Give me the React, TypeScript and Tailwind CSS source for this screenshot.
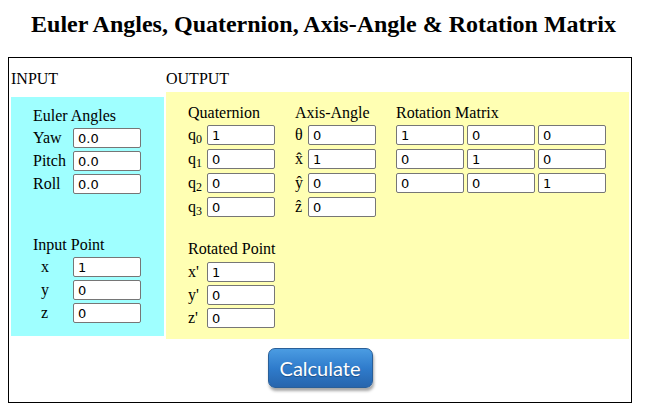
const inputCls =
  "h-[20px] w-[68px] shrink-0 rounded-[2px] border border-[#767676] bg-white px-[4px] text-[13px] leading-[18px] text-black outline-none [font-family:'DejaVu_Sans',sans-serif]";

function Field({ value }: { value: string }) {
  return <input className={inputCls} defaultValue={value} readOnly />;
}

function Row({ label, value, labelCls }: { label: React.ReactNode; value: string; labelCls: string }) {
  return (
    <div className="flex h-[20px] items-center">
      <span className={labelCls}>{label}</span>
      <Field value={value} />
    </div>
  );
}

const Q = ({ n }: { n: number }) => (
  <>
    q<sub>{n}</sub>
  </>
);

export default function App() {
  return (
    <div className="h-[416px] w-[647px] bg-white px-[8px] pt-[10px] text-[16px] text-black [font-family:'Liberation_Serif',serif]">
      <h1 className="text-center text-[24px] font-bold leading-[28px]">
        Euler Angles, Quaternion, Axis-Angle &amp; Rotation Matrix
      </h1>

      <div className="mt-[19px] h-[346px] w-[624px] border border-black">
        {/* header row */}
        <div className="grid h-[32px] grid-cols-[153px_463px] gap-x-[2px] px-[2px] pt-[12px] leading-[18px]">
          <span>INPUT</span>
          <span>OUTPUT</span>
        </div>

        {/* panels */}
        <div className="grid h-[251px] grid-cols-[153px_463px] items-start gap-x-[2px] px-[2px] leading-[18px]">
          <div className="mt-[7px] h-[239px] bg-[#9fffff] pl-[22px] pt-[10px]">
            <div>Euler Angles</div>
            <div className="mt-[3px] flex flex-col gap-[3px]">
              <Row label="Yaw" value="0.0" labelCls="w-[40px]" />
              <Row label="Pitch" value="0.0" labelCls="w-[40px]" />
              <Row label="Roll" value="0.0" labelCls="w-[40px]" />
            </div>
            <div className="mt-[42px]">Input Point</div>
            <div className="mt-[3px] flex flex-col gap-[3px]">
              <Row label="x" value="1" labelCls="w-[40px] pl-[8px]" />
              <Row label="y" value="0" labelCls="w-[40px] pl-[8px]" />
              <Row label="z" value="0" labelCls="w-[40px] pl-[8px]" />
            </div>
          </div>

          <div className="mt-[2px] h-[247px] bg-[#ffffb3] pl-[22px] pt-[12px]">
            <div className="flex gap-[20px]">
              <div className="w-[87px]">
                <div>Quaternion</div>
                <div className="mt-[3px] flex flex-col gap-[4px]">
                  <Row label={<Q n={0} />} value="1" labelCls="w-[19px]" />
                  <Row label={<Q n={1} />} value="0" labelCls="w-[19px]" />
                  <Row label={<Q n={2} />} value="0" labelCls="w-[19px]" />
                  <Row label={<Q n={3} />} value="0" labelCls="w-[19px]" />
                </div>
              </div>
              <div className="w-[81px]">
                <div>Axis-Angle</div>
                <div className="mt-[3px] flex flex-col gap-[4px]">
                  <Row label="θ" value="0" labelCls="w-[13px]" />
                  <Row label={"x\u0302"} value="1" labelCls="w-[13px]" />
                  <Row label="ŷ" value="0" labelCls="w-[13px]" />
                  <Row label="ẑ" value="0" labelCls="w-[13px]" />
                </div>
              </div>
              <div>
                <div>Rotation Matrix</div>
                <div className="mt-[3px] grid grid-cols-[68px_68px_68px] gap-x-[3px] gap-y-[4px]">
                  {["1", "0", "0", "0", "1", "0", "0", "0", "1"].map((v, i) => (
                    <Field key={i} value={v} />
                  ))}
                </div>
              </div>
            </div>

            <div className="mt-[23px]">Rotated Point</div>
            <div className="mt-[4px] flex flex-col gap-[3px]">
              <Row label="x'" value="1" labelCls="w-[19px]" />
              <Row label="y'" value="0" labelCls="w-[19px]" />
              <Row label="z'" value="0" labelCls="w-[19px]" />
            </div>
          </div>
        </div>

        {/* button row */}
        <div className="flex justify-center pt-[7px]">
          <button className="h-[40px] w-[105px] rounded-[7px] border border-[#2a5f98] bg-gradient-to-b from-[#4b9ce2] via-[#2f7ccc] to-[#2765ad] text-[20px] text-white shadow-[1px_3px_3px_rgba(0,0,0,0.35)] [font-family:Lato,sans-serif] [text-shadow:0_1px_1px_rgba(0,0,0,0.3)]">
            Calculate
          </button>
        </div>
      </div>
    </div>
  );
}
